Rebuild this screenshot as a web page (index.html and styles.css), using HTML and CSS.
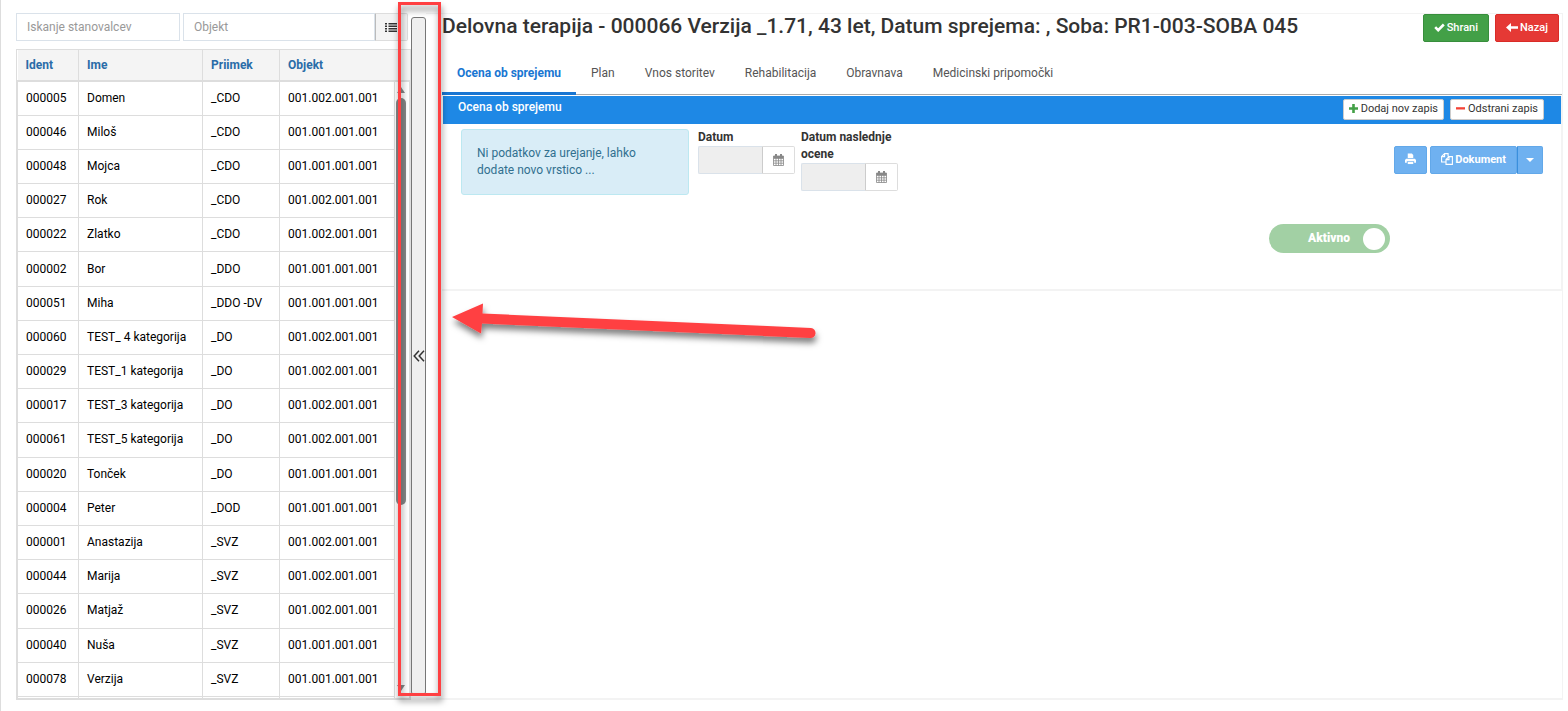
FILE: index.html
```html
<!DOCTYPE html>
<html lang="sl">
<head>
<meta charset="utf-8">
<title>Delovna terapija</title>
<link rel="stylesheet" href="styles.css">
</head>
<body>
<div class="page">
  <aside class="sidebar">
    <form class="search">
      <input class="search-name" type="text" placeholder="Iskanje stanovalcev" aria-label="Iskanje stanovalcev">
      <div class="search-group">
        <input class="search-object" type="text" placeholder="Objekt" aria-label="Objekt">
        <button class="list-button" type="button" aria-label="Seznam">
          <svg width="12" height="9" viewBox="0 0 12 9"><path d="M0 0h2v1.500H0zM0 2.500h2V4H0zM0 5h2v1.500H0zM0 7.500h2V9H0zM3.500 0H12v1.500H3.500zM3.500 2.500H12V4H3.500zM3.500 5H12v1.500H3.500zM3.500 7.500H12V9H3.500z" fill="#333"/></svg>
        </button>
      </div>
    </form>
    <div class="grid">
      <table class="residents">
        <colgroup><col class="c-ident"><col class="c-ime"><col class="c-priimek"><col class="c-objekt"><col class="c-scroll"></colgroup>
        <thead>
          <tr><th>Ident</th><th>Ime</th><th>Priimek</th><th colspan="2">Objekt</th></tr>
        </thead>
        <tbody>
          <tr><td>000005</td><td>Domen</td><td>_CDO</td><td>001.002.001.001</td>
            <td class="scroll-cell" rowspan="19"><div class="scrollbar"><span class="scroll-up"></span><span class="scroll-track"><span class="scroll-thumb"></span></span><span class="scroll-down"></span></div></td></tr>
          <tr><td>000046</td><td>Miloš</td><td>_CDO</td><td>001.001.001.001</td></tr>
          <tr><td>000048</td><td>Mojca</td><td>_CDO</td><td>001.001.001.001</td></tr>
          <tr><td>000027</td><td>Rok</td><td>_CDO</td><td>001.002.001.001</td></tr>
          <tr><td>000022</td><td>Zlatko</td><td>_CDO</td><td>001.002.001.001</td></tr>
          <tr><td>000002</td><td>Bor</td><td>_DDO</td><td>001.001.001.001</td></tr>
          <tr><td>000051</td><td>Miha</td><td>_DDO -DV</td><td>001.001.001.001</td></tr>
          <tr><td>000060</td><td>TEST_ 4 kategorija</td><td>_DO</td><td>001.002.001.001</td></tr>
          <tr><td>000029</td><td>TEST_1 kategorija</td><td>_DO</td><td>001.002.001.001</td></tr>
          <tr><td>000017</td><td>TEST_3 kategorija</td><td>_DO</td><td>001.002.001.001</td></tr>
          <tr><td>000061</td><td>TEST_5 kategorija</td><td>_DO</td><td>001.002.001.001</td></tr>
          <tr><td>000020</td><td>Tonček</td><td>_DO</td><td>001.001.001.001</td></tr>
          <tr><td>000004</td><td>Peter</td><td>_DOD</td><td>001.001.001.001</td></tr>
          <tr><td>000001</td><td>Anastazija</td><td>_SVZ</td><td>001.002.001.001</td></tr>
          <tr><td>000044</td><td>Marija</td><td>_SVZ</td><td>001.002.001.001</td></tr>
          <tr><td>000026</td><td>Matjaž</td><td>_SVZ</td><td>001.002.001.001</td></tr>
          <tr><td>000040</td><td>Nuša</td><td>_SVZ</td><td>001.001.001.001</td></tr>
          <tr><td>000078</td><td>Verzija</td><td>_SVZ</td><td>001.001.001.001</td></tr>
          <tr class="cut"><td></td><td></td><td></td><td></td></tr>
        </tbody>
      </table>
    </div>
  </aside>

  <button class="collapse" type="button" aria-label="Skrij seznam">
    <svg width="12" height="12" viewBox="0 0 12 12"><path d="M6 .8L1.2 6 6 11.2M11 .8L6.2 6l4.800 5.200" fill="none" stroke="#333" stroke-width="1.500"/></svg>
  </button>

  <main class="main">
    <header class="title-bar">
      <h1>Delovna terapija - 000066 Verzija _1.71, 43 let, Datum sprejema: , Soba: PR1-003-SOBA 045</h1>
      <div class="actions">
        <button class="btn btn-save" type="button"><svg width="11" height="9" viewBox="0 0 11 9"><path d="M1.200 4.200l3 3L9.800 1.500" fill="none" stroke="#fff" stroke-width="2.600"/></svg>Shrani</button>
        <button class="btn btn-back" type="button"><svg width="12" height="9" viewBox="0 0 12 9"><path d="M0 4.500L5 0v3.300h7v2.400H5V9z" fill="#fff"/></svg>Nazaj</button>
      </div>
    </header>

    <nav class="tabs">
      <a class="tab active" href="#ocena">Ocena ob sprejemu</a>
      <a class="tab" href="#plan">Plan</a>
      <a class="tab" href="#storitve">Vnos storitev</a>
      <a class="tab" href="#rehabilitacija">Rehabilitacija</a>
      <a class="tab" href="#obravnava">Obravnava</a>
      <a class="tab" href="#pripomocki">Medicinski pripomočki</a>
    </nav>

    <section class="panel" id="ocena">
      <header class="panel-head">
        <h2>Ocena ob sprejemu</h2>
        <div class="panel-actions">
          <button class="mini" type="button"><svg width="9" height="9" viewBox="0 0 9 9"><path d="M3.200 0h2.600v3.200H9v2.600H5.800V9H3.200V5.800H0V3.200h3.200z" fill="#43a047"/></svg>Dodaj nov zapis</button>
          <button class="mini" type="button"><svg width="9" height="9" viewBox="0 0 9 9"><path d="M0 3.200h9v2.300H0z" fill="#f44336"/></svg>Odstrani zapis</button>
        </div>
      </header>
      <div class="panel-body">
        <p class="notice">Ni podatkov za urejanje, lahko dodate novo vrstico ...</p>
        <div class="field">
          <label for="datum">Datum</label>
          <div class="date"><input id="datum" type="text" disabled><button type="button" aria-label="Izberi datum"><svg width="11" height="12" viewBox="0 0 11 12"><path d="M.5 2h10v9.500H.5zM.5 4.500h10M.5 6.800h10M.5 9.200h10M3 4v7.500M5.500 4v7.500M8 4v7.500" fill="none" stroke="#888" stroke-width=".8"/><path d="M.5 2h10v2H.5zM2 0h2v3H2zM7 0h2v3H7z" fill="#888"/></svg></button></div>
        </div>
        <div class="field">
          <label for="naslednji">Datum naslednje ocene</label>
          <div class="date"><input id="naslednji" type="text" disabled><button type="button" aria-label="Izberi datum"><svg width="11" height="12" viewBox="0 0 11 12"><path d="M.5 2h10v9.500H.5zM.5 4.500h10M.5 6.800h10M.5 9.200h10M3 4v7.500M5.500 4v7.500M8 4v7.500" fill="none" stroke="#888" stroke-width=".8"/><path d="M.5 2h10v2H.5zM2 0h2v3H2zM7 0h2v3H7z" fill="#888"/></svg></button></div>
        </div>
        <div class="side">
          <div class="documents">
            <button class="doc-btn print" type="button" disabled aria-label="Natisni"><svg width="12" height="12" viewBox="0 0 12 12"><path d="M3 0h4.500L9 1.500V5H3z" fill="#fff"/><path d="M1.200 5.800h9.600L12 7v3.200h-2V8.500H2v1.700H0V7z" fill="#fff"/><path d="M3 9.200h6v2.300H3z" fill="#fff"/></svg></button>
            <div class="split">
              <button class="doc-btn" type="button" disabled><svg width="12" height="12" viewBox="0 0 12 12"><path d="M4.500 9H.6V3.600L3.600.6h3.500v3M3.600.6v3h-3M8 3.600h3.400v7.800H5V6.600zM8 3.600v3H5" fill="none" stroke="#fff" stroke-width="1.100"/></svg>Dokument</button>
              <button class="doc-btn caret" type="button" disabled aria-label="Več"><svg width="8" height="4" viewBox="0 0 8 4"><path d="M0 0h8L4 4z" fill="#fff"/></svg></button>
            </div>
          </div>
          <label class="toggle"><input type="checkbox" checked disabled><span>Aktivno</span></label>
        </div>
      </div>
    </section>
  </main>
</div>

<svg class="annotation" width="840" height="711" viewBox="0 0 840 711" aria-hidden="true">
  <defs><filter id="shadow" x="0" y="0" width="840" height="711" filterUnits="userSpaceOnUse"><feDropShadow dx="1" dy="5" stdDeviation="3" flood-color="#000" flood-opacity=".5"/></filter></defs>
  <rect x="399.500" y="3.500" width="40" height="691" fill="none" stroke="#ff4143" stroke-width="3" filter="url(#shadow)"/>
  <path d="M452 317L483 303.500L482.500 313.500L811 328A5 5 0 0 1 810 338L482 323.500L481 333.500Z" fill="#ff4143" filter="url(#shadow)"/>
</svg>
</body>
</html>
```

FILE: styles.css
```css
* { box-sizing: border-box; }

body {
  margin: 0;
  background: #fff;
  color: #333;
  font: 12px/17px Roboto, "Noto Sans", sans-serif;
}

button, input { font: inherit; color: inherit; }
button { display: inline-flex; align-items: center; justify-content: center; padding: 0; }
h1, h2, p { margin: 0; }

.page {
  display: flex;
  min-height: 100vh;
  padding: 13px 5px 11px 15px;
  border-left: 1px solid #ddd;
}

/* Resident list */
.sidebar { display: flex; flex-direction: column; gap: 8px; flex: 0 0 395px; }
.search { display: flex; gap: 3px; padding-right: 3px; }
.search input { height: 28px; min-width: 0; padding: 0 10px; border: 1px solid #dae2ea; background: #fff; }
.search input::placeholder { color: #999; }
.search-name { width: 164px; }
.search-group { display: flex; flex: 1; }
.search-object { flex: 1; }
.list-button { width: 33px; padding-right: 1px; border: 1px solid #ddd; border-left-color: #bbb; border-radius: 0 2px 2px 0; background: #f4f4f4; }

.grid { flex: 1; display: flex; border: 1px solid #ddd; }
.residents { width: 100%; table-layout: fixed; border-collapse: collapse; color: #000; }
.c-ident { width: 61px; }
.c-ime { width: 124px; }
.c-priimek { width: 77px; }
.c-objekt { width: 115px; }
.residents th { height: 31px; padding: 0 8px; background: #f4f4f4; color: #2a6ca8; font-weight: 700; text-align: left; border-left: 1px solid #ddd; border-bottom: 2px solid #ddd; }
.residents th:first-child { border-left: 0; }
.residents td { height: 34px; padding: 0 8px; border: 1px solid #ddd; white-space: nowrap; }
.residents .cut td { height: 2px; padding: 0; }
.residents .scroll-cell { padding: 0; height: auto; vertical-align: top; }

.scrollbar { display: flex; flex-direction: column; align-items: center; gap: 5px; height: 612px; padding: 5px 2px 3px 0; }
.scroll-up, .scroll-down { border: 4px solid transparent; }
.scroll-up { border-top: 0; border-bottom: 6px solid #888; }
.scroll-down { border-bottom: 0; border-top: 6px solid #888; }
.scroll-track { flex: 1; width: 10px; }
.scroll-thumb { display: block; height: 70%; border-radius: 5px; background: #888; }

.collapse { flex: 0 0 15px; margin: 4px 0 5px; border: 1px solid #767676; border-radius: 3px; background: #efefef; }

/* Record */
.main { flex: 1; min-width: 0; padding-left: 16px; border: solid #f3f3f3; border-width: 1px 1px 2px 0; }
.title-bar { display: flex; justify-content: space-between; padding-right: 3px; }
h1 { font-size: 21px; line-height: 25px; font-weight: 500; }
.actions { display: flex; gap: 6px; }
.btn { height: 28px; gap: 2px; padding: 0 10px 2px; border: 1px solid; border-radius: 2px; color: #fff; font-size: 11px; font-weight: 500; }
.btn-save { background: #43a047; border-color: #388e3c; }
.btn-back { background: #e53935; border-color: #d92b27; }

.tabs { display: flex; margin-top: 9px; border-bottom: 1px solid #aaa; }
.tab { height: 44px; padding: 14px 15px 0; margin-bottom: -1px; color: #555; text-decoration: none; border-bottom: 3px solid transparent; }
.tab.active { color: #1976d2; font-weight: 700; border-bottom-color: #1976d2; }

.panel { margin-top: 1px; padding-left: 1px; border-right: 1px solid #f3f3f3; border-bottom: 2px solid #f3f3f3; }
.panel-head { display: flex; justify-content: space-between; height: 28px; padding: 3px 17px 0 15px; background: #1e88e5; }
h2 { color: #fff; font-size: 12px; line-height: 17px; font-weight: 500; }
.panel-actions { display: flex; align-items: flex-start; gap: 6px; }
.mini { height: 21px; gap: 3px; padding: 0 5px 2px; border: 1px solid #ccc; border-radius: 2px; background: #fff; font-size: 11px; }

.panel-body { display: flex; align-items: flex-start; min-height: 165px; padding: 5px 18px 0; }
.notice { width: 228px; min-height: 66px; margin-right: 9px; padding: 15px; border: 1px solid #bce8f1; border-radius: 3px; background: #d9edf7; color: #31708f; }
.field { width: 97px; margin-right: 6px; }
.field label { display: block; font-weight: 700; }
.date { display: flex; height: 28px; }
.date input { flex: 1; min-width: 0; border: 1px solid #dae2ea; border-right: 0; border-radius: 2px 0 0 2px; background: #eee; }
.date button { width: 33px; border: 1px solid #ddd; border-left-color: #ccc; border-radius: 0 2px 2px 0; background: #fff; }

.side { display: flex; flex-direction: column; flex: 1; gap: 50px; padding-top: 17px; }
.documents { display: flex; justify-content: flex-end; gap: 3px; }
.split { display: flex; }
.doc-btn { height: 28px; gap: 2px; padding: 0 10px 2px; border: 1px solid #62a8e9; border-radius: 2px; background: #6fb1f0; color: #fff; font-size: 11px; font-weight: 700; }
.print { width: 33px; }
.caret { width: 26px; padding: 0; border-left-color: #3a8fdd; border-radius: 0 2px 2px 0; }
.toggle { display: flex; align-items: center; justify-content: flex-end; align-self: flex-end; width: 121px; height: 29px; margin-right: 153px; padding-right: 5px; gap: 13px; border-radius: 15px; background: #a2d0a4; color: #fff; font-weight: 900; }
.toggle input { order: 1; appearance: none; width: 22px; height: 22px; margin: 0; border-radius: 50%; background: #fff; }

.annotation { position: absolute; top: 0; left: 0; pointer-events: none; }
```
